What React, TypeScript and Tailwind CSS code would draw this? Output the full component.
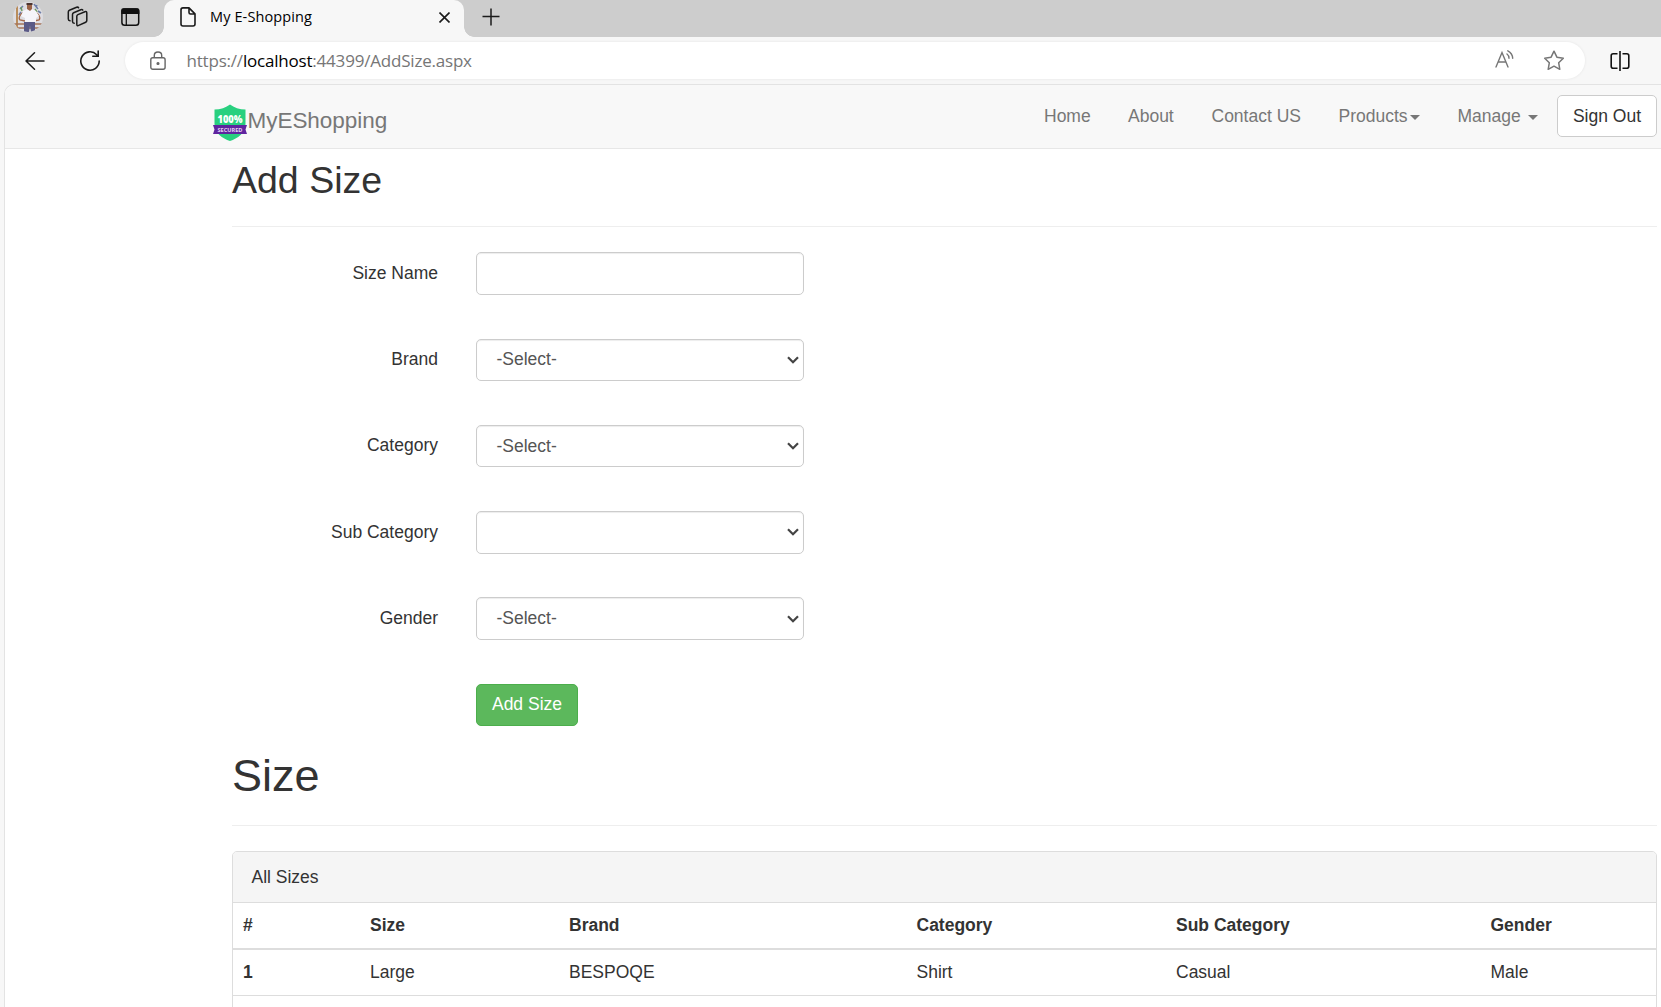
import React from "react";

const rows = [["1", "Large", "BESPOQE", "Shirt", "Casual", "Male"]];
const heads = ["#", "Size", "Brand", "Category", "Sub Category", "Gender"];

function Avatar() {
  return (
    <svg width="30" height="32" viewBox="0 0 30 32" className="ml-[13px]">
      <defs>
        <clipPath id="av"><circle cx="15" cy="17" r="15" /></clipPath>
      </defs>
      <g clipPath="url(#av)">
        <rect width="30" height="32" fill="#dedde2" />
        <path d="M4 3v27" stroke="#b98d5c" strokeWidth="2" />
        <path d="M0 24h30M3 28h26" stroke="#a5745a" strokeWidth="1.5" />
        <path d="M7 9l3-3M21 4l4 5M25 11l3 2M23 6l4-2M6 15l2-3" stroke="#6f7fa8" strokeWidth="1.6" />
        <path d="M22 9l2 3M8 7l1 4" stroke="#6b9a5c" strokeWidth="1.4" />
        <path d="M11 12c-4 2-6 6-4 8l5 1M22 12c4 2 6 6 4 8l-5 1" fill="none" stroke="#a56a4c" strokeWidth="1.300" />
        <path d="M10 11l4-2h5l4 2 3 5-3 2v4h-11v-4l-4-2z" fill="#f6f5fa" />
        <path d="M11 22h11v10h-4l-1-6-1 6h-5z" fill="#5b5a86" />
        <path d="M14 4h5v5l-2 2-3-2z" fill="#9a6247" />
        <path d="M13.500 3h6v2h-6z" fill="#4b3430" />
      </g>
    </svg>
  );
}

function Shield() {
  return (
    <svg width="34" height="38" viewBox="0 0 34 38" className="shrink-0">
      <path d="M17 0.500C13 3.500 7.500 5.500 1.500 5.500V20c0 9 8 14.500 15.500 17 7.500-2.500 15.500-8 15.500-17V5.500C26.500 5.500 21 3.500 17 .5z" fill="#29d07f" />
      <path d="M0 21h34l-1.500 4.500L34 30H0l1.500-4.500z" fill="#5f259f" />
      <text x="17" y="18.500" textAnchor="middle" fontSize="10" fontWeight="800" fill="#fff" textLength="25" lengthAdjust="spacingAndGlyphs" fontFamily="Open Sans, sans-serif">100%</text>
      <text x="17" y="27.700" textAnchor="middle" fontSize="6" fontWeight="700" fill="#e5d5f5" textLength="25" lengthAdjust="spacingAndGlyphs" fontFamily="Open Sans, sans-serif">SECURED</text>
    </svg>
  );
}

function Caret() {
  return <span className="mt-[2px] inline-block border-x-[5px] border-t-[5px] border-x-transparent border-t-[#777]" />;
}

function Field({ label, value, select = true }: { label: string; value: string; select?: boolean }) {
  return (
    <div className="flex h-[86.250px] items-start">
      <label className="w-[206px] pt-[8.500px] text-right leading-[25px]">{label}</label>
      <div className="ml-[38px] flex h-[42.500px] w-[328px] items-center justify-between rounded-[5px] border border-[#ccc] bg-white pr-[4px] pl-[19.500px] text-[#555] shadow-[inset_0_1px_1px_rgba(0,0,0,0.075)]">
        <span>{value}</span>
        {select && (
          <svg width="12" height="8" viewBox="0 0 12 8" fill="none" stroke="#444" strokeWidth="2.200">
            <path d="M1 1.200l5 5 5-5" />
          </svg>
        )}
      </div>
    </div>
  );
}

function TabStrip() {
  return (
    <div className="flex h-[37px] shrink-0 bg-[#cdcdcd]">
      <div className="flex w-[164px] items-start bg-[#cdcdcd]">
        <Avatar />
        <svg width="21" height="21" viewBox="0 0 21 21" fill="none" stroke="#1b1b1b" strokeWidth="1.500" strokeLinejoin="round" strokeLinecap="round" className="mt-[6px] ml-[24px]">
          <path d="M9.800 10.300q0-1.200 1.100-1.700l7-2.900q1.900-.7 1.900 1.200v7.700q0 1.200-1.100 1.700l-7 3.100q-1.900.8-1.900-1.200z" />
          <path d="M7.200 17.300q-1.700 0-1.700-1.700V8.400q0-1.200 1.100-1.700l7.200-3q1.500-.5 2 .5" />
          <path d="M3 14.800Q1.300 14.600 1.300 13V6q0-1.200 1.100-1.700l7.200-3q1.500-.5 2 .5" />
        </svg>
        <svg width="19" height="19" viewBox="0 0 19 19" fill="none" stroke="#111" strokeWidth="1.500" className="mt-[8px] ml-[33px]">
          <rect x=".9" y=".9" width="16.800" height="16.400" rx="2.800" />
          <path d="M2 1h14.600q1 0 1 1v3.300H1V2q0-1 1-1z" fill="#111" />
          <path d="M5.300 5v12" strokeWidth="1.300" />
        </svg>
      </div>
      <div className="relative flex h-[37px] w-[300px] items-center rounded-t-[10px] bg-[#f7f7f7]">
        <span className="absolute bottom-0 left-[-10px] h-[10px] w-[10px] bg-[radial-gradient(circle_at_0_0,#cdcdcd_9.500px,#f7f7f7_10px)]" />
        <span className="absolute right-[-10px] bottom-0 h-[10px] w-[10px] bg-[radial-gradient(circle_at_100%_0,#cdcdcd_9.500px,#f7f7f7_10px)]" />
        <svg width="16" height="20" viewBox="0 0 16 20" fill="none" stroke="#1b1b1b" strokeWidth="1.600" strokeLinejoin="round" className="mb-[3px] ml-[16px]">
          <path d="M3 .9h6l6 6V17q0 2-2 2H3q-2 0-2-2V2.900q0-2 2-2zM9 1v4.500q0 1.500 1.500 1.500H15" />
        </svg>
        <span className="mb-[5px] ml-[14px] w-[104px] font-['Open_Sans',sans-serif] text-[14.500px] tracking-[0.120px] whitespace-nowrap text-black">My E-Shopping</span>
        <svg width="11" height="11" viewBox="0 0 11 11" stroke="#1b1b1b" strokeWidth="1.600" className="mt-[-2px] ml-[125px]">
          <path d="M.5.500l10 10M10.500.500l-10 10" />
        </svg>
      </div>
      <svg width="18" height="18" viewBox="0 0 18 18" stroke="#1b1b1b" strokeWidth="1.500" className="mt-[8px] ml-[18px]">
        <path d="M9 .500v17M.500 8.500h17" />
      </svg>
    </div>
  );
}

function AddressBar() {
  return (
    <div className="flex h-[47px] shrink-0 items-center bg-[#f7f7f7]">
      <svg width="20" height="18" viewBox="0 0 20 18" fill="none" stroke="#1b1b1b" strokeWidth="1.500" strokeLinecap="round" strokeLinejoin="round" className="ml-[25px]">
        <path d="M19 9H1M9.500.800L1 9l8.500 8.200" />
      </svg>
      <svg width="22" height="22" viewBox="0 0 22 22" fill="none" stroke="#1b1b1b" strokeWidth="1.600" strokeLinecap="round" className="ml-[34px]">
        <path d="M20.200 11A9.200 9.200 0 1 1 17.700 4.700L19 6M19.200 1v5.300h-5.400" />
      </svg>
      <div className="ml-[24px] flex h-[37px] w-[1460px] items-center rounded-full bg-white shadow-[0_0_3px_rgba(0,0,0,0.080)]">
        <svg width="16" height="20" viewBox="0 0 16 20" fill="none" stroke="#666" strokeWidth="1.400" className="ml-[24.500px]">
          <rect x=".8" y="6.700" width="14.300" height="11.600" rx="2" />
          <path d="M4.300 6.500V4.500q0-3.500 3.700-3.500t3.700 3.500v2" />
          <circle cx="8" cy="12.500" r=".9" fill="#666" />
        </svg>
        <span className="ml-[21px] grow font-['Open_Sans',sans-serif] text-[17px] tracking-[-0.200px] text-[#767676]">
          https://<span className="text-black">localhost</span>:44399/AddSize.aspx
        </span>
        <svg width="20" height="18" viewBox="0 0 20 18" fill="none" stroke="#767676" strokeWidth="1.400" strokeLinecap="round" className="mb-[3px]">
          <path d="M1 17L7 2.500 13 17M3.200 12h7.700M12 4q2 1.500 2 4.300M12.800.8q4.700 2.500 4.900 7.500" />
        </svg>
        <svg width="22" height="21" viewBox="0 0 22 21" fill="none" stroke="#767676" strokeWidth="1.500" strokeLinejoin="round" className="mr-[20px] ml-[28px]">
          <path d="M11 1.200l2.900 6 6.400 1-4.600 4.600 1.100 6.500L11 16.200l-5.800 3.100 1.100-6.500L1.700 8.200l6.400-1z" />
        </svg>
      </div>
      <svg width="20" height="20" viewBox="0 0 20 20" fill="none" stroke="#111" strokeWidth="1.600" className="ml-[24.500px]">
        <path d="M7.500 2.800H3.200q-2 0-2 2v10.400q0 2 2 2h4.300M12.500 2.800h4.300q2 0 2 2v10.400q0 2-2 2h-4.300M10 0v20" />
      </svg>
    </div>
  );
}

export default function App() {
  return (
    <div className="flex h-[1007px] w-full flex-col overflow-hidden bg-[#f7f7f7] font-['Liberation_Sans',Arial,sans-serif] text-[17.500px] leading-[25px] text-[#333]">
      <TabStrip />
      <AddressBar />
      <div className="ml-[4px] min-h-0 grow overflow-hidden rounded-tl-[10px] border-t border-l border-[#e3e3e3] bg-white">
        <nav className="flex h-[64px] items-start border-b border-[#e7e7e7] bg-[#f8f8f8] text-[#777]">
          <div className="mt-[19px] ml-[208px] flex items-start">
            <Shield />
            <span className="ml-[0.500px] pt-[4px] text-[22.500px] leading-[25px] tracking-[-0.040px]">MyEShopping</span>
          </div>
          <div className="mt-[19px] ml-auto flex">
            <a className="w-[84px]">Home</a>
            <a className="w-[83.500px]">About</a>
            <a className="w-[127px]">Contact US</a>
            <a className="flex w-[119px] items-center gap-[2px]">Products<Caret /></a>
            <a className="flex w-[99.500px] items-center gap-[7.500px]">Manage <Caret /></a>
          </div>
          <button className="mt-[10px] mr-[4px] h-[42px] w-[100px] rounded-[5px] border border-[#ccc] bg-white text-[#333]">Sign Out</button>
        </nav>
        <main className="mr-[4px] ml-[227px]">
          <h2 className="h-[78px] border-b border-[#eee] pt-[11px] text-[37.500px] leading-[41px]">Add Size</h2>
          <div className="mt-[25.250px]">
            <Field label="Size Name" value="" select={false} />
            <Field label="Brand" value="-Select-" />
            <Field label="Category" value="-Select-" />
            <Field label="Sub Category" value="" />
            <Field label="Gender" value="-Select-" />
            <button className="ml-[244px] flex h-[42.500px] w-[102px] items-center justify-center rounded-[5px] border border-[#4cae4c] bg-[#5cb85c] pb-[1px] text-white">Add Size</button>
          </div>
          <h1 className="h-[100px] border-b border-[#eee] pt-[25px] text-[45px] leading-[50px]">Size</h1>
          <section className="mt-[25px] h-[400px] rounded-[5px] border border-[#ddd]">
            <div className="h-[51px] rounded-t-[4px] border-b border-[#ddd] bg-[#f5f5f5] pt-[13px] pl-[18.500px]">All Sizes</div>
            <table className="w-full table-fixed border-separate border-spacing-0 text-left">
              <colgroup>
                <col className="w-[127px]" /><col className="w-[199px]" /><col className="w-[347.500px]" />
                <col className="w-[259.500px]" /><col className="w-[314.500px]" /><col />
              </colgroup>
              <thead>
                <tr className="h-[47px]">
                  {heads.map((h) => <th key={h} className="border-b-2 border-[#ddd] px-[10px] py-0 font-bold">{h}</th>)}
                </tr>
              </thead>
              <tbody>
                {rows.map((r) => (
                  <tr key={r[0]} className="h-[46px]">
                    {r.map((c, i) => <td key={i} className={i === 0 ? "border-b border-[#ddd] px-[10px] py-0 font-bold" : "border-b border-[#ddd] px-[10px] py-0"}>{c}</td>)}
                  </tr>
                ))}
              </tbody>
            </table>
          </section>
        </main>
      </div>
    </div>
  );
}
